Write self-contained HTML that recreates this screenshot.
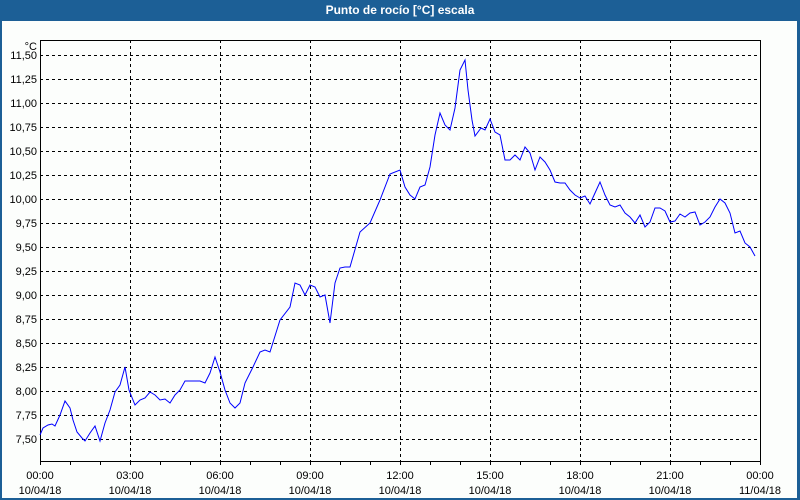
<!DOCTYPE html>
<html><head><meta charset="utf-8"><style>
html,body{margin:0;padding:0;width:800px;height:500px;overflow:hidden;background:#fff}
</style></head><body>
<svg width="800" height="500" xmlns="http://www.w3.org/2000/svg" font-family="Liberation Sans, sans-serif" font-size="11">
<rect x="0" y="0" width="800" height="500" fill="#1c5f96"/>
<rect x="2" y="21" width="795" height="477" fill="#fcfefc"/>
<text x="400" y="14" fill="#fff" font-weight="bold" font-size="12" text-anchor="middle">Punto de rocío [°C] escala</text>
<g stroke="#000" stroke-width="1" stroke-dasharray="3,3" shape-rendering="crispEdges">
<line x1="40" y1="55.5" x2="760" y2="55.5"/><line x1="40" y1="79.5" x2="760" y2="79.5"/><line x1="40" y1="103.5" x2="760" y2="103.5"/><line x1="40" y1="127.5" x2="760" y2="127.5"/><line x1="40" y1="151.5" x2="760" y2="151.5"/><line x1="40" y1="175.5" x2="760" y2="175.5"/><line x1="40" y1="199.5" x2="760" y2="199.5"/><line x1="40" y1="223.5" x2="760" y2="223.5"/><line x1="40" y1="247.5" x2="760" y2="247.5"/><line x1="40" y1="271.5" x2="760" y2="271.5"/><line x1="40" y1="295.5" x2="760" y2="295.5"/><line x1="40" y1="319.5" x2="760" y2="319.5"/><line x1="40" y1="343.5" x2="760" y2="343.5"/><line x1="40" y1="367.5" x2="760" y2="367.5"/><line x1="40" y1="391.5" x2="760" y2="391.5"/><line x1="40" y1="415.5" x2="760" y2="415.5"/><line x1="40" y1="439.5" x2="760" y2="439.5"/>
<line x1="130.5" y1="40" x2="130.5" y2="461"/><line x1="220.5" y1="40" x2="220.5" y2="461"/><line x1="310.5" y1="40" x2="310.5" y2="461"/><line x1="400.5" y1="40" x2="400.5" y2="461"/><line x1="490.5" y1="40" x2="490.5" y2="461"/><line x1="580.5" y1="40" x2="580.5" y2="461"/><line x1="670.5" y1="40" x2="670.5" y2="461"/>
</g>
<g stroke="#000" stroke-width="1" shape-rendering="crispEdges" fill="none">
<rect x="40.5" y="40.5" width="720" height="421"/>
<path d="M40.5 461v4M70.5 461v4M100.5 461v4M130.5 461v4M160.5 461v4M190.5 461v4M220.5 461v4M250.5 461v4M280.5 461v4M310.5 461v4M340.5 461v4M370.5 461v4M400.5 461v4M430.5 461v4M460.5 461v4M490.5 461v4M520.5 461v4M550.5 461v4M580.5 461v4M610.5 461v4M640.5 461v4M670.5 461v4M700.5 461v4M730.5 461v4M760.5 461v4"/>
</g>
<polyline fill="none" stroke="#0000ff" stroke-width="1" points="40,435 43,428 48,425 52,424 55,426 60,415 65,401 70,408 73,420 77,432 82,438 85,441 90,433 95,426 100,441 105,423 110,410 115,392 120,385 125,367 129,390 135,405 140,400 145,398 150,392 155,395 160,400 165,399 170,403 175,395 180,390 185,381 195,381 200,381 205,383 210,373 215,357 220,372 225,390 230,403 235,408 240,403 245,383 253,367 260,352 265,350 270,352 280,320 290,307 295,283 300,285 305,295 310,285 315,287 320,297 325,295 330,323 335,283 340,268 345,267 350,267 360,232 370,223 380,200 390,174 400,170 405,187 410,195 415,199 420,187 425,185 430,167 435,135 440,113 445,125 450,130 455,108 460,70 465,60 468,90 472,120 475,136 481,128 485,130 490,119 495,132 500,135 505,160 510,160 515,155 520,160 525,147 530,153 535,170 540,157 545,162 550,170 555,182 560,183 565,183 570,190 575,195 580,198 585,196 590,204 595,193 600,182 605,195 610,205 615,207 620,205 625,213 630,217 635,223 640,215 645,227 650,222 655,208 660,208 665,211 670,222 675,221 680,214 685,217 690,213 695,212 700,225 705,222 710,217 715,207 720,199 725,203 730,213 735,233 740,231 745,243 750,247 755,256"/>
<g fill="#000" text-anchor="end">
<text x="37" y="50">°C</text>
<text x="37" y="59">11,50</text><text x="37" y="83">11,25</text><text x="37" y="107">11,00</text><text x="37" y="131">10,75</text><text x="37" y="155">10,50</text><text x="37" y="179">10,25</text><text x="37" y="203">10,00</text><text x="37" y="227">9,75</text><text x="37" y="251">9,50</text><text x="37" y="275">9,25</text><text x="37" y="299">9,00</text><text x="37" y="323">8,75</text><text x="37" y="347">8,50</text><text x="37" y="371">8,25</text><text x="37" y="395">8,00</text><text x="37" y="419">7,75</text><text x="37" y="443">7,50</text>
</g>
<g fill="#000" text-anchor="middle">
<text x="40" y="479">00:00</text><text x="40" y="494">10/04/18</text>
<text x="130" y="479">03:00</text><text x="130" y="494">10/04/18</text>
<text x="220" y="479">06:00</text><text x="220" y="494">10/04/18</text>
<text x="310" y="479">09:00</text><text x="310" y="494">10/04/18</text>
<text x="400" y="479">12:00</text><text x="400" y="494">10/04/18</text>
<text x="490" y="479">15:00</text><text x="490" y="494">10/04/18</text>
<text x="580" y="479">18:00</text><text x="580" y="494">10/04/18</text>
<text x="670" y="479">21:00</text><text x="670" y="494">10/04/18</text>
<text x="760" y="479">00:00</text><text x="760" y="494">11/04/18</text>
</g>
</svg>
</body></html>
